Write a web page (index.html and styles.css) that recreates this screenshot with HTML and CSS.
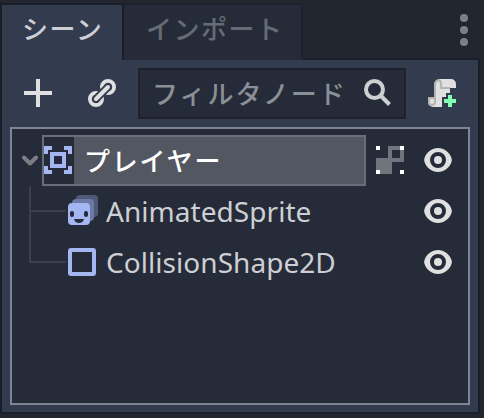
FILE: index.html
```html
<!DOCTYPE html>
<html lang="ja">
<head>
<meta charset="utf-8">
<title>シーン</title>
<link rel="stylesheet" href="styles.css">
</head>
<body>
<svg class="defs" width="0" height="0">
  <symbol id="eye" viewBox="0 0 28 24">
    <path fill-rule="evenodd" d="M14 0C8 0 2 4.500.4 10.500Q-.1 12 .4 13.500C2 19.500 8 24 14 24S26 19.500 27.600 13.500Q28.100 12 27.600 10.500C26 4.500 20 0 14 0ZM14 4a8 8 0 1 1 0 16a8 8 0 1 1 0-16Z"/>
    <circle cx="14" cy="12" r="4"/>
  </symbol>
</svg>
<div class="dock">
  <header class="tabs">
    <div class="tab active">シーン</div>
    <div class="tab">インポート</div>
    <svg class="more" width="8" height="32" viewBox="0 0 8 32"><circle cx="4" cy="4" r="4"/><circle cx="4" cy="16" r="4"/><circle cx="4" cy="28" r="4"/></svg>
  </header>
  <main class="panel">
    <div class="toolbar">
      <svg class="add" width="28" height="28" viewBox="0 0 28 28"><path d="M12 0h4v12h12v4H16v12h-4V16H0v-4h12z"/></svg>
      <svg class="link" width="28" height="28" viewBox="0 0 28 28" fill="none">
        <circle class="ring" cx="20" cy="8" r="6"/>
        <circle class="ring" cx="8" cy="20" r="6"/>
        <path class="gap" d="M8 20L20 8"/>
        <path class="ring" d="M8 20L20 8"/>
      </svg>
      <div class="filter">
        <span class="hint">フィルタノード</span>
        <svg width="28" height="28" viewBox="0 0 28 28" fill="none"><circle cx="10.500" cy="10.500" r="8.500"/><path d="M16.500 16.500L25.500 25.500"/></svg>
      </div>
      <svg class="script" width="28" height="28" viewBox="0 0 28 28">
        <path fill="#e0e0e0" d="M12 0H23a5 5 0 0 1 5 5V9H22V28H5a5 5 0 0 1-5-5V18H6V6a6 6 0 0 1 6-6Z"/>
        <path fill="none" stroke="#b4b4b4" stroke-width="2" d="M7 18V6a5 5 0 0 1 4-5q2 1 2 4v4h9M1 23V19H7v4a3 3 0 0 1-6 0"/>
        <path fill="#333b4f" d="M18 14h8v4h2v12H14V18h4z"/>
        <path fill="#84ffb1" d="M20 16h4v4h4v4h-4v4h-4v-4h-4v-4h4z"/>
      </svg>
    </div>
    <div class="tree">
      <div class="row root">
        <svg class="arrow" width="16" height="12" viewBox="0 0 16 12"><path d="M2 2.500L8 8.500L14 2.500"/></svg>
        <div class="selected">
          <div class="cell"><svg width="28" height="28" viewBox="0 0 28 28"><path fill-rule="evenodd" d="M0 0h8v4H4v4H0zM20 0h8v8h-4V4h-4zM0 20h4v4h4v4H0zM24 20h4v8h-8v-4h4zM6 6h16v16H6zM10 10v8h8v-8z"/></svg></div>
          <span class="name">プレイヤー</span>
        </div>
        <svg class="group" width="28" height="28" viewBox="0 0 28 28"><path fill="#70747c" fill-rule="evenodd" d="M12 0h16v16H16v12H0V12h12zM16 4v8h8V4z"/><path fill="#fff" d="M0 0h4v4H0zM24 0h4v4h-4zM0 24h4v4H0zM24 24h4v4h-4z"/></svg>
        <svg class="eye" width="28" height="24"><use href="#eye"/></svg>
      </div>
      <div class="row child">
        <div class="branch"></div>
        <svg class="sprite" width="30" height="30" viewBox="0 0 30 30"><rect x="8" width="22" height="22" rx="4" fill="#4f5979"/><rect x="4" y="4" width="22" height="22" rx="4" fill="#6e7aa6"/><rect y="8" width="22" height="22" rx="4" fill="#a5b7f3"/><g fill="#252b38"><rect x="2" y="16" width="4" height="6" rx="2"/><rect x="16" y="16" width="4" height="6" rx="2"/><path d="M6 24h10q-1 4-5 4t-5-4z"/></g></svg>
        <span class="name">AnimatedSprite</span>
        <svg class="eye" width="28" height="24"><use href="#eye"/></svg>
      </div>
      <div class="row child">
        <div class="branch"></div>
        <svg class="shape" width="28" height="28" viewBox="0 0 28 28"><rect x="2" y="2" width="24" height="24" rx="1"/></svg>
        <span class="name">CollisionShape2D</span>
        <svg class="eye" width="28" height="24"><use href="#eye"/></svg>
      </div>
    </div>
  </main>
</div>
</body>
</html>
```

FILE: styles.css
```css
* { box-sizing: border-box; }
body {
  margin: 0;
  width: 484px;
  height: 418px;
  overflow: hidden;
  background: #21262f;
  color: #cdcfd4;
  font: 28px/1 "Noto Sans", "Noto Sans CJK JP", sans-serif;
}
svg { display: block; flex: none; }
.defs { position: absolute; }
.dock { padding-top: 3px; }
.tabs { display: flex; height: 57px; border-bottom: 2px solid #191e28; width: 480px; }
.tab, .hint, .selected .name {
  font-family: "Noto Sans CJK JP", sans-serif;
  font-size: 26px;
  font-weight: 500;
  letter-spacing: 1.5px;
}
.tab {
  height: 57px;
  width: 179px;
  padding: 10px 0 0 22px;
  background: #252b38;
  border: 2px solid #1d222d;
  border-left: 0;
  border-bottom-color: #252b38;
  color: #666b75;
  white-space: nowrap;
}
.tab.active {
  width: 124px;
  padding-left: 20px;
  background: #333b4f;
  border: 2px solid #191e28;
  border-bottom: 0;
  color: #cdcfd4;
}
.more { margin: 11px 12px 0 auto; fill: #7d808a; }
.panel {
  width: 480px;
  height: 354px;
  background: #333b4f;
  border: 2px solid #191e28;
  border-top: 0;
  padding: 8px 8px 8px;
}
.toolbar { display: flex; align-items: center; height: 51px; padding: 0 12px 0 14px; fill: #e0e0e0; }
.toolbar > svg { margin-top: -1px; }
.toolbar .link { margin-left: 36px; fill: none; }
.ring { stroke: #e0e0e0; stroke-width: 4; stroke-linecap: round; }
.gap { stroke: #333b4f; stroke-width: 8; stroke-linecap: round; }
.filter {
  display: flex;
  align-items: center;
  justify-content: space-between;
  width: 268px;
  height: 51px;
  margin-left: 22px;
  padding: 0 12px;
  background: #252b38;
  border: 2px solid #1d222d;
}
.hint { width: 200px; margin-top: -2px; overflow: hidden; white-space: nowrap; color: #8b8f97; line-height: 40px; letter-spacing: 2px; }
.filter svg { stroke: #cdcfd2; stroke-width: 4; margin-top: -1px; }
.toolbar .script { margin-left: 22px; }
.tree {
  height: 278px;
  margin-top: 8px;
  border: 2px solid #7e8490;
  background: #252b38;
}
.row { display: flex; align-items: center; height: 51px; }
.root { margin-top: 6px; padding-left: 10px; }
.arrow { fill: none; stroke: #7b7e85; stroke-width: 4; stroke-linecap: round; stroke-linejoin: round; }
.selected {
  display: flex;
  align-items: center;
  width: 324px;
  height: 51px;
  margin-left: 4px;
  background: #535761;
  border: 2px solid #686e7a;
  color: #fff;
}
.cell { display: flex; align-items: center; width: 30px; height: 47px; background: #252b38; fill: #a5b7f3; }
.cell svg { margin-top: -1px; }
.selected .name { margin: -2px 0 0 10px; letter-spacing: 1.8px; }
.group { margin: -1px 0 0 10px; }
.root .eye { margin-left: 20px; }
.eye { fill: #e0e0e0; margin-top: -1px; }
.child { padding-left: 17px; }
.branch { position: relative; width: 37px; height: 51px; margin-right: 2px; }
.branch::before {
  content: "";
  position: absolute;
  left: 0;
  top: 0;
  width: 35px;
  height: 24px;
  border: solid #3b404c;
  border-width: 0 0 2px 2px;
}
.child + .child .branch::before { top: -26px; height: 50px; }
.child .name { margin: -2px 0 0 10px; white-space: nowrap; letter-spacing: 0.05px; }
.sprite { margin-top: -3px; }
.child .sprite + .name { margin-left: 8px; }
.child .eye { margin-left: auto; margin-right: 16px; }
.shape { fill: none; stroke: #a5b7f3; stroke-width: 4; margin-top: -1px; }
```
